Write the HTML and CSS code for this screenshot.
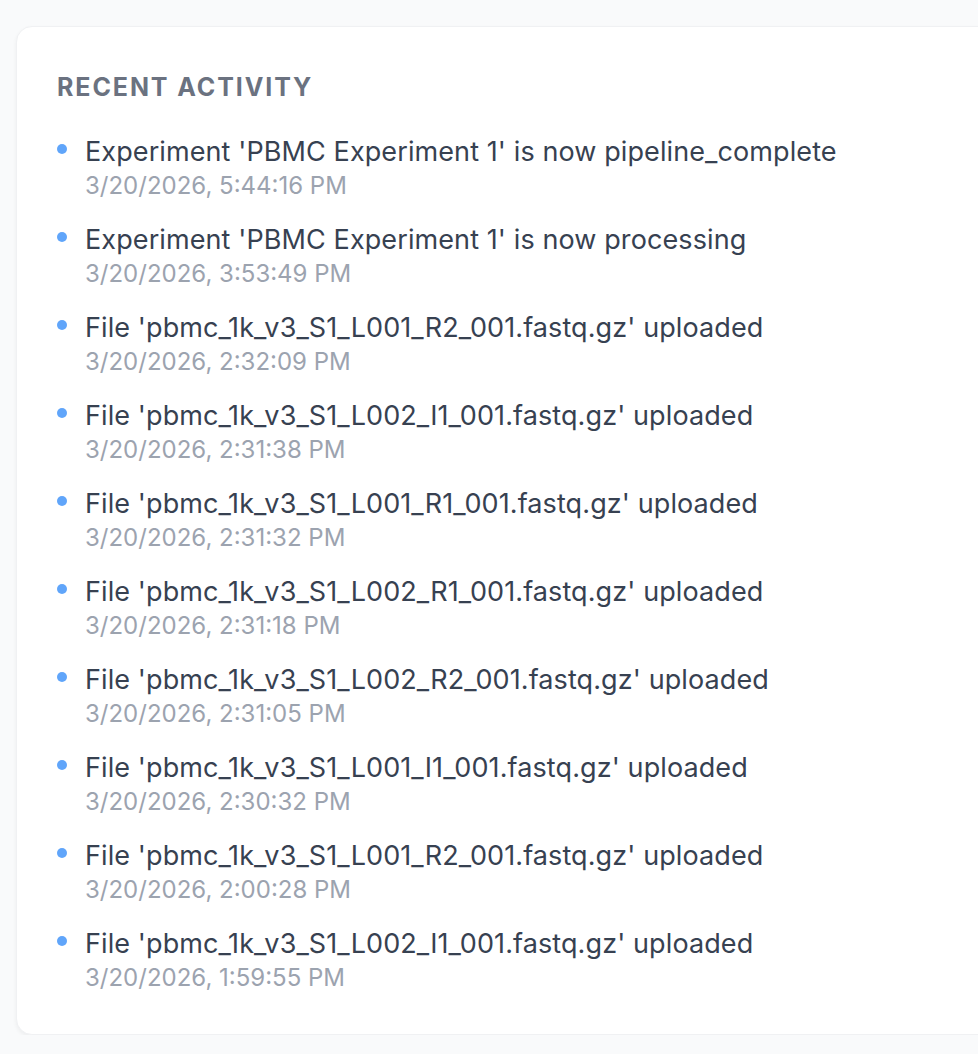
FILE: index.html
```
<!DOCTYPE html>
<html lang="en">

<head>
    <meta charset="UTF-8">
    <meta name="viewport" content="width=device-width, initial-scale=1.0">
    <title>Recent Activity</title>
    <link rel="stylesheet" href="styles.css">
</head>

<body>
    <div class="page">
        <div class="card">
            <h2 class="card-title">Recent Activity</h2>
            <ul class="activity-list">
                <li class="activity-item">
                    <span class="dot"></span>
                    <div class="activity-body">
                        <div class="activity-text">Experiment 'PBMC Experiment 1' is now pipeline_complete</div>
                        <div class="activity-time">3/20/2026, 5:44:16 PM</div>
                    </div>
                </li>
                <li class="activity-item">
                    <span class="dot"></span>
                    <div class="activity-body">
                        <div class="activity-text">Experiment 'PBMC Experiment 1' is now processing</div>
                        <div class="activity-time">3/20/2026, 3:53:49 PM</div>
                    </div>
                </li>
                <li class="activity-item">
                    <span class="dot"></span>
                    <div class="activity-body">
                        <div class="activity-text">File 'pbmc_1k_v3_S1_L001_R2_001.fastq.gz' uploaded</div>
                        <div class="activity-time">3/20/2026, 2:32:09 PM</div>
                    </div>
                </li>
                <li class="activity-item">
                    <span class="dot"></span>
                    <div class="activity-body">
                        <div class="activity-text">File 'pbmc_1k_v3_S1_L002_I1_001.fastq.gz' uploaded</div>
                        <div class="activity-time">3/20/2026, 2:31:38 PM</div>
                    </div>
                </li>
                <li class="activity-item">
                    <span class="dot"></span>
                    <div class="activity-body">
                        <div class="activity-text">File 'pbmc_1k_v3_S1_L001_R1_001.fastq.gz' uploaded</div>
                        <div class="activity-time">3/20/2026, 2:31:32 PM</div>
                    </div>
                </li>
                <li class="activity-item">
                    <span class="dot"></span>
                    <div class="activity-body">
                        <div class="activity-text">File 'pbmc_1k_v3_S1_L002_R1_001.fastq.gz' uploaded</div>
                        <div class="activity-time">3/20/2026, 2:31:18 PM</div>
                    </div>
                </li>
                <li class="activity-item">
                    <span class="dot"></span>
                    <div class="activity-body">
                        <div class="activity-text">File 'pbmc_1k_v3_S1_L002_R2_001.fastq.gz' uploaded</div>
                        <div class="activity-time">3/20/2026, 2:31:05 PM</div>
                    </div>
                </li>
                <li class="activity-item">
                    <span class="dot"></span>
                    <div class="activity-body">
                        <div class="activity-text">File 'pbmc_1k_v3_S1_L001_I1_001.fastq.gz' uploaded</div>
                        <div class="activity-time">3/20/2026, 2:30:32 PM</div>
                    </div>
                </li>
                <li class="activity-item">
                    <span class="dot"></span>
                    <div class="activity-body">
                        <div class="activity-text">File 'pbmc_1k_v3_S1_L001_R2_001.fastq.gz' uploaded</div>
                        <div class="activity-time">3/20/2026, 2:00:28 PM</div>
                    </div>
                </li>
                <li class="activity-item">
                    <span class="dot"></span>
                    <div class="activity-body">
                        <div class="activity-text">File 'pbmc_1k_v3_S1_L002_I1_001.fastq.gz' uploaded</div>
                        <div class="activity-time">3/20/2026, 1:59:55 PM</div>
                    </div>
                </li>
            </ul>
        </div>
    </div>
</body>

</html>
```

FILE: styles.css
```
html,
body {
    margin: 0;
    padding: 0;
    background: #f9fafb;
    overflow: hidden;
}

body {
    font-family: Inter, "Noto Sans", "Liberation Sans", sans-serif;
}

.page {
    padding: 26px 0 0 16px;
}

.card {
    width: 1000px;
    box-sizing: border-box;
    background: #ffffff;
    border: 1px solid #f0f1f3;
    border-radius: 16px;
    box-shadow: 0 2px 4px rgba(0, 0, 0, 0.05);
    padding: 44px 40px 40px 40px;
}

.card-title {
    margin: 0 0 31px 0;
    font-size: 25px;
    line-height: 32px;
    font-weight: 700;
    letter-spacing: 1.9px;
    text-transform: uppercase;
    color: #6b7280;
}

.activity-list {
    list-style: none;
    margin: 0;
    padding: 0;
    display: flex;
    flex-direction: column;
    gap: 20px;
}

.activity-item {
    display: flex;
    align-items: flex-start;
    gap: 18px;
}

.dot {
    flex: none;
    width: 10px;
    height: 10px;
    margin-top: 10px;
    border-radius: 50%;
    background: #60a5fa;
}

.activity-text {
    font-size: 27px;
    letter-spacing: 0.1px;
    line-height: 36px;
    color: #374151;
}

.activity-time {
    font-size: 24px;
    line-height: 32px;
    color: #9ca3af;
}
```
